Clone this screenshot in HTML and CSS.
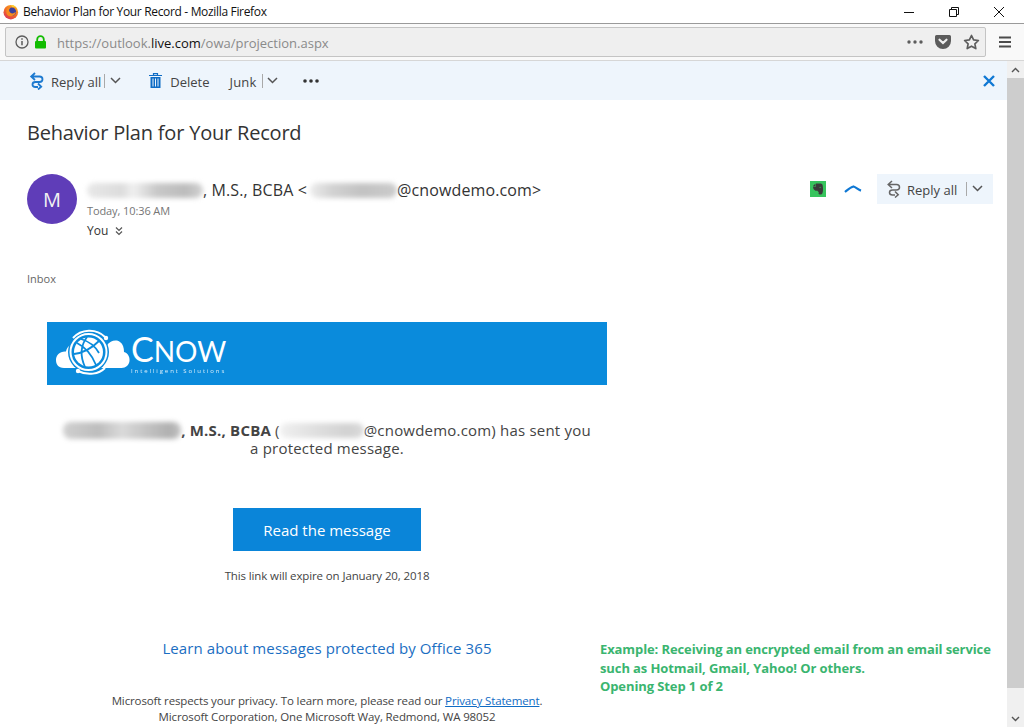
FILE: index.html
```html
<!DOCTYPE html>
<html lang="en">
<head>
<meta charset="utf-8">
<title>Behavior Plan for Your Record - Mozilla Firefox</title>
<link rel="stylesheet" href="styles.css">
</head>
<body>
<div class="window">
  <header class="titlebar">
    <svg class="ff-logo" viewBox="0 0 16 16" width="16" height="16"><defs><linearGradient id="ffg" x1="0.8" y1="0" x2="0.2" y2="1"><stop offset="0" stop-color="#fbb01e"/><stop offset=".55" stop-color="#f1662a"/><stop offset="1" stop-color="#d8345f"/></linearGradient></defs><circle cx="7.800" cy="8.200" r="7.300" fill="url(#ffg)"/><circle cx="8.800" cy="7.800" r="4.300" fill="#3a3f9e"/><path d="M4 4.500c1.500-1 3-1.300 4.500-.8C7 3.600 5.800 5 6.200 6.800c.4 1.900 2.400 3 4.300 2.500 1-.3 1.700-.9 2.300-1.500-.3 2.700-2.400 4.500-4.800 4.400C5.300 12.600 3.300 10.500 3.300 8c0-1.300.2-2.500.7-3.500z" fill="#f68b1f"/><path d="M8 .9c2.600-.2 5 1.400 6 3.500C12.800 3 11 2.800 9.600 3.200 9 2.400 8.500 1.700 8 .9z" fill="#fdd02f"/></svg>
    <span class="title-text">Behavior Plan for Your Record - Mozilla Firefox</span>
    <div class="win-controls">
      <svg width="12" height="12" viewBox="0 0 12 12"><path d="M1 6.500h10" stroke="#111" fill="none"/></svg>
      <svg width="12" height="12" viewBox="0 0 12 12"><path d="M1.500 3.500h7v7h-7zM3.500 3.500v-2h7v7h-2" stroke="#111" fill="none"/></svg>
      <svg width="12" height="12" viewBox="0 0 12 12"><path d="M1 1l10 10M11 1L1 11" stroke="#111" fill="none"/></svg>
    </div>
  </header>
  <nav class="navbar">
    <div class="urlbar">
      <svg class="ic-info" width="14" height="14" viewBox="0 0 14 14"><circle cx="7" cy="7" r="6" fill="none" stroke="#5c5c5c" stroke-width="1.300"/><path d="M7 6v4.300M7 3.300v1.500" stroke="#5c5c5c" stroke-width="1.500"/></svg>
      <svg class="ic-lock" width="13" height="14" viewBox="0 0 13 14"><path d="M3.200 7V4.500a3.300 3.300 0 0 1 6.600 0V7" fill="none" stroke="#12bc00" stroke-width="1.800"/><rect x="1" y="6" width="11" height="7.500" rx="1" fill="#12bc00"/></svg>
      <span class="url"><span class="url-dim">https://outlook.</span><span class="url-host">live.com</span><span class="url-dim">/owa/projection.aspx</span></span>
      <div class="url-actions">
        <svg width="16" height="4" viewBox="0 0 16 4"><g fill="#5c5c5c"><circle cx="2" cy="2" r="1.700"/><circle cx="8" cy="2" r="1.700"/><circle cx="14" cy="2" r="1.700"/></g></svg>
        <svg width="16" height="14" viewBox="0 0 16 14"><path d="M1.500 0h13A1.500 1.500 0 0 1 16 1.500V6A8 8 0 0 1 0 6V1.500A1.500 1.500 0 0 1 1.500 0z" fill="#5c5c5c"/><path d="M4.500 4.700L8 8l3.500-3.300" fill="none" stroke="#f0f0f0" stroke-width="2.200" stroke-linecap="round"/></svg>
        <svg width="17" height="16" viewBox="0 0 17 16"><path d="M8.500 1.500l2.100 4.400 4.800.6-3.500 3.300.9 4.800-4.300-2.400-4.300 2.400.9-4.800L1.600 6.500l4.800-.6z" fill="none" stroke="#5c5c5c" stroke-width="1.700" stroke-linejoin="round"/></svg>
      </div>
    </div>
    <svg class="ic-menu" width="12" height="12" viewBox="0 0 12 12"><path d="M0 1.500h12M0 6h12M0 10.500h12" stroke="#4c4c4c" stroke-width="1.800"/></svg>
  </nav>
  <div class="viewport">
    <main class="page">
      <div class="cmdbar">
        <span class="cmd cmd-reply">
          <svg class="ic-reply" width="15" height="18" viewBox="0 0 15 18"><path d="M6 1L2.200 4.500 6 8M2.200 4.500H10.500Q13.500 4.500 13.500 7.300 13.500 10 10.500 10H6.500Q3.500 10 3.500 12.500 3.500 15 6.500 15H9M9 11.500l3.200 3.300L9 17.500" fill="none" stroke="#1d7ad0" stroke-width="1.800"/></svg>
          <span>Reply all</span><i class="sep"></i><svg class="chev" width="11" height="7" viewBox="0 0 11 7"><path d="M1 1l4.500 4.500L10 1" fill="none" stroke="#555" stroke-width="1.500"/></svg>
        </span>
        <span class="cmd cmd-delete">
          <svg class="ic-trash" width="13" height="15" viewBox="0 0 13 15"><path d="M0 2.500h13M4.500 2.500V.7h4v1.800" fill="none" stroke="#0f6cc5" stroke-width="1.200"/><path d="M1.500 4h10v11h-10z" fill="#0f6cc5"/><path d="M4 5.500v8M6.500 5.500v8M9 5.500v8" stroke="#eef5fc"/></svg>
          <span>Delete</span>
        </span>
        <span class="cmd cmd-junk"><span>Junk</span><i class="sep sep-junk"></i><svg class="chev" width="11" height="7" viewBox="0 0 11 7"><path d="M1 1l4.500 4.500L10 1" fill="none" stroke="#555" stroke-width="1.500"/></svg></span>
        <svg class="cmd-more" width="16" height="4" viewBox="0 0 16 4"><g fill="#333"><circle cx="2" cy="2" r="1.800"/><circle cx="8" cy="2" r="1.800"/><circle cx="14" cy="2" r="1.800"/></g></svg>
        <svg class="cmd-close" width="12" height="12" viewBox="0 0 12 12"><path d="M1 1l10 10M11 1L1 11" stroke="#0f78d4" stroke-width="2.400"/></svg>
      </div>
      <h1 class="subject">Behavior Plan for Your Record</h1>
      <section class="sender">
        <div class="avatar">M</div>
        <div class="sender-info">
          <div class="from"><span class="blur blur-name1"></span>, M.S., BCBA &lt;<span class="blur blur-mail1"></span>@cnowdemo.com&gt;</div>
          <div class="when">Today, 10:36 AM</div>
          <div class="to">You <svg width="8" height="10" viewBox="0 0 8 10"><path d="M1 1.500l3 3 3-3M1 5.500l3 3 3-3" fill="none" stroke="#555" stroke-width="1.200"/></svg></div>
        </div>
        <div class="sender-actions">
          <svg class="ic-evernote" width="16" height="16" viewBox="0 0 16 16"><rect width="16" height="16" fill="#37c45d"/><path d="M3 5l2.500-2.500V5zM6 2.500h4c1.500 0 2.500.5 2.700 2 .5 3 .5 5.500-.2 7.500-.5 2-4 2-4 0 0-1 1.500-1.200 2-.4-1.500 0-2.500-.6-3-1.800h-2C4 9.300 3 7.500 3 5.600h3z" fill="#3a3a3a"/><path d="M9.500 6.500c.6-.4 1.200-.2 1.300.4" stroke="#37c45d" stroke-width=".7" fill="none"/></svg>
          <svg class="ic-up" width="18" height="8" viewBox="0 0 18 8"><path d="M1 7C3.500 5 6 2.200 9.500 1.500 12 2.300 14 4.600 17 5.600" fill="none" stroke="#0f78d4" stroke-width="2.200"/></svg>
          <span class="reply-btn">
            <svg width="15" height="18" viewBox="0 0 15 18"><path d="M6 1L2.200 4.500 6 8M2.200 4.500H10.500Q13.500 4.500 13.500 7.300 13.500 10 10.500 10H6.500Q3.500 10 3.500 12.500 3.500 15 6.500 15H9M9 11.500l3.200 3.300L9 17.500" fill="none" stroke="#666" stroke-width="1.500"/></svg>
            <span>Reply all</span><i class="sep sep-wide"></i><svg class="chev" width="11" height="7" viewBox="0 0 11 7"><path d="M1 1l4.500 4.500L10 1" fill="none" stroke="#555" stroke-width="1.500"/></svg>
          </span>
        </div>
      </section>
      <div class="folder">Inbox</div>
      <article class="message">
        <div class="banner">
          <svg class="cnow-mark" width="80" height="56" viewBox="0 0 80 56"><path d="M12 42C6 42 4 38 4 34c0-5 4-9 10-8.500C15 20 19 17 25 19h30c3-4 9-6 13-3 3 2 4 6 4 10 4 1 6 5 5.500 9-.5 4-3.500 7-8 7z" fill="#fff"/><circle cx="36.500" cy="26" r="20.500" fill="#0a8bdc"/><circle cx="36.500" cy="26" r="18" fill="none" stroke="#fff" stroke-width="2"/><circle cx="36.500" cy="26" r="14.500" fill="#fff"/><path d="M25 17c8 4 15 12 19 22M35 11c-6 8-7 19-2 30M22 28c8-1 18-6 25-13M29 13c7 2 14 7 18 14" fill="none" stroke="#0a8bdc" stroke-width="1.800"/><path d="M21 12C29 3 44 2 53 11M26 45c10 5 21 3 27-3" fill="none" stroke="#fff" stroke-width="2"/><circle cx="54" cy="12" r="2.200" fill="#fff"/><circle cx="26" cy="45" r="2.200" fill="#fff"/></svg>
          <div class="cnow-text"><div class="cnow-word">C<span>NOW</span></div><div class="cnow-tag">Intelligent Solutions</div></div>
        </div>
        <p class="lead"><span class="blur blur-name2"></span><b>, M.S., BCBA</b> (<span class="blur blur-mail2"></span>@cnowdemo.com) has sent you a protected message.</p>
        <div class="cta-row"><a class="cta">Read the message</a></div>
        <p class="expire">This link will expire on January 20, 2018</p>
        <p class="learn"><a>Learn about messages protected by Office 365</a></p>
        <p class="legal">Microsoft respects your privacy. To learn more, please read our <a>Privacy Statement</a>.<br>Microsoft Corporation, One Microsoft Way, Redmond, WA 98052</p>
      </article>
      <aside class="note">Example: Receiving an encrypted email from an email service such as Hotmail, Gmail, Yahoo! Or others.<br>Opening Step 1 of 2</aside>
    </main>
    <div class="scrollbar">
      <div class="sb-btn"><svg width="9" height="6" viewBox="0 0 9 6"><path d="M1 5l3.500-3.500L8 5" fill="none" stroke="#555" stroke-width="1.400"/></svg></div>
      <div class="sb-thumb"></div>
      <div class="sb-track"></div>
      <div class="sb-btn"><svg width="9" height="6" viewBox="0 0 9 6"><path d="M1 1l3.500 3.500L8 1" fill="none" stroke="#555" stroke-width="1.400"/></svg></div>
    </div>
  </div>
</div>
</body>
</html>
```
FILE: styles.css
```css
* { box-sizing: border-box; }
html, body { margin: 0; height: 100%; overflow: hidden; background: #fff; }
body { font-family: "Open Sans", "Noto Sans", sans-serif; color: #333; }
.window { width: 1024px; height: 727px; display: flex; flex-direction: column; }

.titlebar { height: 24px; flex: none; display: flex; align-items: center; padding-left: 3px; border-bottom: 1px solid #9a9a9a; background: #fff; }
.ff-logo { flex: none; }
.title-text { margin-left: 4px; font-size: 12px; letter-spacing: -.33px; color: #111; white-space: nowrap; }
.win-controls { margin-left: auto; display: flex; gap: 33px; padding-right: 19px; }

.navbar { height: 37px; flex: none; display: flex; align-items: center; padding: 0 12px 0 5px; background: #f9f9f9; border-bottom: 1px solid #d6d6d6; }
.urlbar { width: 981px; height: 30px; display: flex; align-items: center; padding: 0 5px 0 9px; background: #efefef; border: 1px solid #c4c4c4; border-radius: 2px; }
.ic-lock { margin-left: 5px; }
.url { margin-left: 10px; padding-top: 2px; font-size: 13px; white-space: nowrap; }
.url-dim { color: #8a8a8a; }
.url-host { color: #111; }
.url-actions { margin-left: auto; display: flex; align-items: center; gap: 12px; }
.ic-menu { margin-left: 13px; }

.viewport { flex: 1; min-height: 0; display: flex; }
.page { flex: 1; min-width: 0; position: relative; }

.cmdbar { height: 39px; display: flex; align-items: center; padding: 0 12px 0 29px; background: #eef5fc; font-size: 13px; color: #444; }
.cmd { display: flex; align-items: center; }
.cmd span { padding-top: 2px; }
.cmd-reply span { margin-left: 7px; }
.sep { width: 1px; height: 14px; background: #a9a9a9; margin: 0 5px 0 3px; display: block; }
.sep-junk { margin: 0 4px 0 5px; }
.cmd-delete { margin-left: 28px; }
.cmd-delete span { margin-left: 8px; }
.cmd-junk { margin-left: 20px; }
.cmd-junk span { letter-spacing: .2px; }
.cmd-more { margin-left: 25px; }
.cmd-close { margin-left: auto; }

.subject { margin: 19px 0 0 27px; font-size: 20px; font-weight: 400; letter-spacing: -.2px; line-height: 27px; color: #333; }

.sender { display: flex; margin: 28px 14px 0 27px; }
.avatar { width: 50px; height: 50px; flex: none; border-radius: 50%; background: #5f3db8; color: #f2f2f2; display: flex; align-items: center; justify-content: center; font-size: 20px; }
.sender-info { margin-left: 10px; }
.from { height: 24px; display: flex; align-items: center; font-size: 16px; letter-spacing: .12px; color: #333; white-space: pre; margin-top: 4px; }
.when { font-size: 11px; line-height: 16px; color: #767676; margin-top: 1px; letter-spacing: -.1px; }
.to { font-size: 12px; line-height: 16px; color: #333; margin-top: 4px; display: flex; align-items: center; gap: 7px; }
.sender-actions { margin-left: auto; height: 29px; display: flex; align-items: center; }
.ic-up { margin-left: 18px; }
.reply-btn { margin-left: 15px; height: 30px; width: 116px; background: #eef5fc; display: flex; align-items: center; padding-left: 9px; font-size: 13px; color: #444; }
.reply-btn span { margin-left: 6px; padding-top: 2px; }
.sep-wide { margin: 0 5px 0 9px; }

.blur { display: inline-block; height: 15px; border-radius: 8px; filter: blur(2.500px); }
.blur-name1 { width: 116px; background: linear-gradient(90deg, #e8e8e8, #dcdcdc 30%, #f0f0f0 40%, #c8c8c8 60%, #bcbcbc 85%, #d2d2d2); }
.blur-mail1 { width: 87px; margin-left: 3px; background: linear-gradient(90deg, #ececec, #d2d2d2 25%, #c2c2c2 60%, #cbcbcb); }
.blur-name2 { width: 118px; height: 17px; vertical-align: -3px; background: linear-gradient(90deg, #d0d0d0, #bdbdbd 30%, #dadada 50%, #c4c4c4 70%, #b0b0b0 90%, #c2c2c2); }
.blur-mail2 { width: 84px; vertical-align: -2px; background: linear-gradient(90deg, #f0f0f0, #e0e0e0 40%, #d2d2d2 80%, #dadada); }

.folder { margin: 32px 0 0 27px; font-size: 11px; line-height: 16px; color: #666; }

.message { width: 560px; margin: 35px 0 0 47px; text-align: center; font-size: 15px; color: #444; }
.banner { height: 63px; background: #0a8bdc; display: flex; align-items: center; padding-left: 5px; text-align: left; color: #fff; }
.cnow-mark { flex: none; }
.cnow-text { margin-left: -1px; }
.cnow-word { font-size: 34px; line-height: 32px; font-family: "Lato", sans-serif; font-weight: 400; }
.cnow-word span { font-size: 28px; }
.cnow-tag { font-size: 6px; line-height: 8px; letter-spacing: 1.900px; opacity: .85; }
.lead { margin: 36px 0 0; line-height: 18px; padding: 0 14px; letter-spacing: .2px; }
.cta-row { margin-top: 51px; }
.cta { display: block; width: 188px; height: 43px; margin: 0 auto; line-height: 45px; background: #0a85d9; color: #fff; font-size: 15px; letter-spacing: 0; }
.expire { margin: 17px 0 0; font-size: 11.500px; line-height: 16px; color: #444; letter-spacing: -.12px; }
.learn { margin: 53px 0 0; font-size: 15px; line-height: 22px; letter-spacing: .1px; color: #1b6ec2; }
.legal { margin: 34px 0 0; font-size: 11.500px; line-height: 16px; color: #444; letter-spacing: -.13px; }
.legal a { color: #0f6cc5; text-decoration: underline; }

.note { position: absolute; left: 600px; top: 579px; width: 400px; font-size: 13px; line-height: 18.700px; font-weight: 700; color: #3ab56f; letter-spacing: -.1px; }

.scrollbar { width: 17px; flex: none; display: flex; flex-direction: column; background: #f0f0f0; }
.sb-btn { height: 17px; flex: none; display: flex; align-items: center; justify-content: center; }
.sb-thumb { height: 610px; flex: none; background: #cdcdcd; }
.sb-track { flex: 1; }
```
